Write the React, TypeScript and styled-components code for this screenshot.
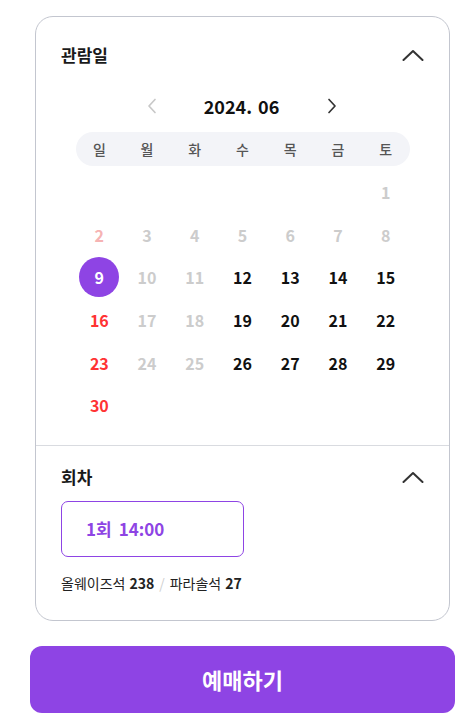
import React, { useState } from 'react';
import styled, { createGlobalStyle } from 'styled-components';

const GlobalStyle = createGlobalStyle`
  html, body {
    margin: 0;
    padding: 0;
    background: #ffffff;
    font-family: "Noto Sans CJK KR", "Noto Sans", sans-serif;
    color: #111;
  }
  * { box-sizing: border-box; }
`;

const Page = styled.div`
  width: 473px;
  padding: 16px 18px 0 30px;
`;

const Card = styled.div`
  margin: 0 5px;
  border: 1px solid #c3c6cf;
  border-radius: 18px;
`;

const Section = styled.section<{ $bordered?: boolean }>`
  padding: ${(p) => (p.$bordered ? '19px 25px 27px' : '26px 25px 18px')};
  border-top: ${(p) => (p.$bordered ? '1px solid #d9dbe0' : 'none')};
`;

const SectionHead = styled.div`
  display: flex;
  align-items: center;
  justify-content: space-between;
  height: 24px;
`;

const Title = styled.h2`
  margin: 0;
  font-size: 17px;
  font-weight: 700;
  color: #1a1a1a;
  line-height: 24px;
`;

const IconButton = styled.button`
  display: flex;
  align-items: center;
  justify-content: center;
  padding: 0;
  border: none;
  background: none;
  cursor: pointer;
`;

const Calendar = styled.div`
  width: 334px;
  margin: 27px auto 0;
`;

const MonthNav = styled.div`
  display: flex;
  align-items: center;
  justify-content: center;
  gap: 34px;
  height: 24px;
  padding-right: 2px;
`;

const MonthLabel = styled.span`
  font-size: 18px;
  font-weight: 700;
  word-spacing: 2px;
  width: 102px;
  text-align: center;
`;

const WeekBar = styled.div`
  display: grid;
  grid-template-columns: repeat(7, 1fr);
  margin-top: 14px;
  height: 34px;
  align-items: center;
  background: #f3f4f8;
  border-radius: 17px;
`;

const WeekDay = styled.span`
  text-align: center;
  font-size: 14px;
  font-weight: 500;
  color: #555;
`;

const DayGrid = styled.div`
  display: grid;
  grid-template-columns: repeat(7, 1fr);
  grid-auto-rows: 42.6px;
  margin-top: 5px;
`;

type DayKind = 'off' | 'offSun' | 'sun' | 'on' | 'selected';

const dayColor: Record<DayKind, string> = {
  off: '#cccccc',
  offSun: '#f6b3b3',
  sun: '#ff3333',
  on: '#111111',
  selected: '#ffffff',
};

const DayCell = styled.div`
  display: flex;
  align-items: center;
  justify-content: center;
`;

const Day = styled.span<{ $kind: DayKind }>`
  display: flex;
  align-items: center;
  justify-content: center;
  width: 40px;
  height: 40px;
  border-radius: 50%;
  font-size: 16px;
  font-weight: 700;
  color: ${(p) => dayColor[p.$kind]};
  background: ${(p) => (p.$kind === 'selected' ? '#8e44e4' : 'transparent')};
  cursor: ${(p) => (p.$kind === 'off' || p.$kind === 'offSun' ? 'default' : 'pointer')};
`;

const SessionButton = styled.button`
  display: flex;
  align-items: center;
  gap: 7px;
  margin-top: 12px;
  width: 183px;
  height: 56px;
  padding: 0 0 0 24px;
  border: 1px solid #8e44e4;
  border-radius: 7px;
  background: #fff;
  color: #8e44e4;
  font-family: inherit;
  font-size: 17px;
  font-weight: 700;
  cursor: pointer;
`;

const SeatInfo = styled.p`
  margin: 16px 0 0;
  font-size: 14px;
  line-height: 20px;
  color: #222;
`;

const Count = styled.b`
  font-weight: 700;
  margin-left: 4px;
`;

const Slash = styled.span`
  color: #d0d0d0;
  margin: 0 5px;
`;

const ReserveButton = styled.button`
  display: block;
  width: 425px;
  height: 67px;
  margin-top: 25px;
  border: none;
  border-radius: 12px;
  background: #8e44e4;
  color: #fff;
  font-family: inherit;
  font-size: 22px;
  font-weight: 700;
  cursor: pointer;
`;

const ChevronUp = () => (
  <svg width="22" height="12" viewBox="0 0 22 12" fill="none">
    <path d="M1.5 11 L11 2 L20.5 11" stroke="#333" strokeWidth="2" strokeLinecap="round" strokeLinejoin="round" />
  </svg>
);

const Arrow = ({ dir, color }: { dir: 'left' | 'right'; color: string }) => (
  <svg width="10" height="16" viewBox="0 0 10 16" fill="none">
    <path
      d={dir === 'left' ? 'M8 1.5 L2 8 L8 14.5' : 'M2 1.5 L8 8 L2 14.5'}
      stroke={color}
      strokeWidth="1.7"
      strokeLinecap="round"
      strokeLinejoin="round"
    />
  </svg>
);

const weekdays = ['일', '월', '화', '수', '목', '금', '토'];

function kindOf(day: number, selected: number): DayKind {
  const col = (day + 5) % 7; // 2024-06-01 is a Saturday
  const offDays = [1, 2, 3, 4, 5, 6, 7, 8, 10, 11, 17, 18, 24, 25];
  if (day === selected) return 'selected';
  if (offDays.includes(day)) return col === 0 ? 'offSun' : 'off';
  return col === 0 ? 'sun' : 'on';
}

function App() {
  const [selected, setSelected] = useState(9);
  const cells: (number | null)[] = [...Array(6).fill(null), ...Array.from({ length: 30 }, (_, i) => i + 1)];

  return (
    <Page>
      <GlobalStyle />
      <Card>
        <Section>
          <SectionHead>
            <Title>관람일</Title>
            <IconButton><ChevronUp /></IconButton>
          </SectionHead>
          <Calendar>
            <MonthNav>
              <IconButton><Arrow dir="left" color="#c8c8c8" /></IconButton>
              <MonthLabel>2024. 06</MonthLabel>
              <IconButton><Arrow dir="right" color="#333" /></IconButton>
            </MonthNav>
            <WeekBar>
              {weekdays.map((w) => (
                <WeekDay key={w}>{w}</WeekDay>
              ))}
            </WeekBar>
            <DayGrid>
              {cells.map((d, i) => (
                <DayCell key={i}>
                  {d && (
                    <Day
                      $kind={kindOf(d, selected)}
                      onClick={() => {
                        const k = kindOf(d, selected);
                        if (k !== 'off' && k !== 'offSun') setSelected(d);
                      }}
                    >
                      {d}
                    </Day>
                  )}
                </DayCell>
              ))}
            </DayGrid>
          </Calendar>
        </Section>
        <Section $bordered>
          <SectionHead>
            <Title>회차</Title>
            <IconButton><ChevronUp /></IconButton>
          </SectionHead>
          <SessionButton>
            <span>1회</span>
            <span>14:00</span>
          </SessionButton>
          <SeatInfo>
            올웨이즈석<Count>238</Count>
            <Slash>/</Slash>
            파라솔석<Count>27</Count>
          </SeatInfo>
        </Section>
      </Card>
      <ReserveButton>예매하기</ReserveButton>
    </Page>
  );
}

export default App;
